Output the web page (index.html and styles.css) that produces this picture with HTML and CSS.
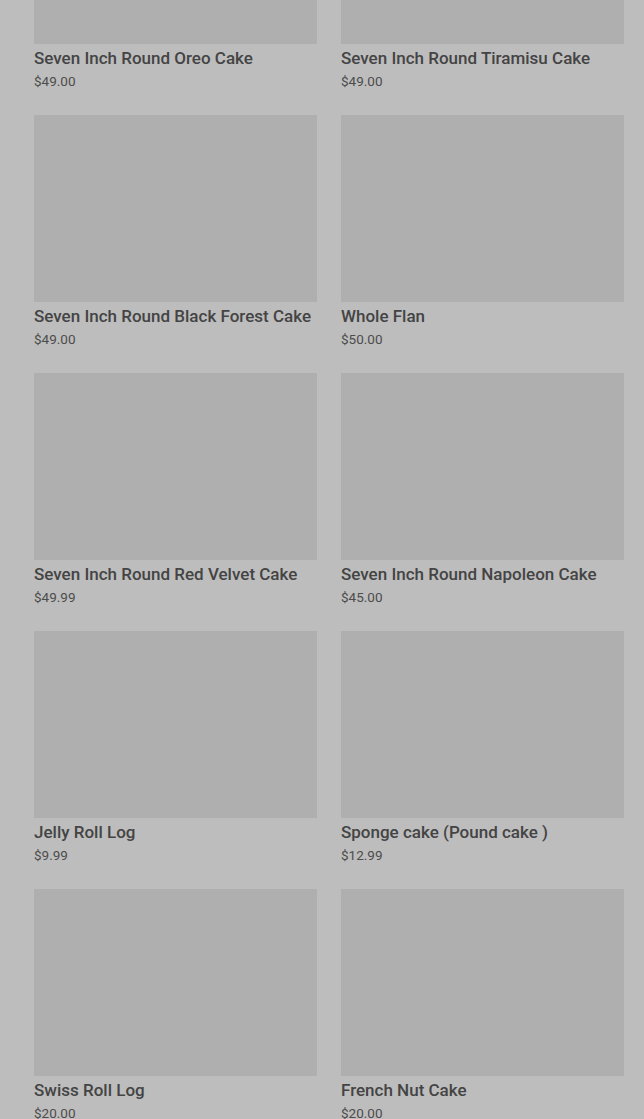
FILE: index.html
```html
<!DOCTYPE html>
<html lang="en">
<head>
  <meta charset="UTF-8" />
  <meta name="viewport" content="width=device-width, initial-scale=1.0"/>
  <title>Cakes</title>
  <link rel="stylesheet" href="styles.css">
</head>
<body>
  <div class="product-grid">
    <div class="card"><div class="thumb"></div><div class="title">Seven Inch Round Oreo Cake</div><div class="price">$49.00</div></div>
    <div class="card"><div class="thumb"></div><div class="title">Seven Inch Round Tiramisu Cake</div><div class="price">$49.00</div></div>
    <div class="card"><div class="thumb"></div><div class="title">Seven Inch Round Black Forest Cake</div><div class="price">$49.00</div></div>
    <div class="card"><div class="thumb"></div><div class="title">Whole Flan</div><div class="price">$50.00</div></div>
    <div class="card"><div class="thumb"></div><div class="title">Seven Inch Round Red Velvet Cake</div><div class="price">$49.99</div></div>
    <div class="card"><div class="thumb"></div><div class="title">Seven Inch Round Napoleon Cake</div><div class="price">$45.00</div></div>
    <div class="card"><div class="thumb"></div><div class="title">Jelly Roll Log</div><div class="price">$9.99</div></div>
    <div class="card"><div class="thumb"></div><div class="title">Sponge cake (Pound cake )</div><div class="price">$12.99</div></div>
    <div class="card"><div class="thumb"></div><div class="title">Swiss Roll Log</div><div class="price">$20.00</div></div>
    <div class="card"><div class="thumb"></div><div class="title">French Nut Cake</div><div class="price">$20.00</div></div>
  </div>
</body>
</html>
```

FILE: styles.css
```css
html, body {
  margin: 0;
  background: #bdbdbd;
  overflow: hidden;
}
body {
  font-family: Roboto, "Liberation Sans", sans-serif;
  color: #404040;
  padding: 0 20px 0 34px;
}
.product-grid {
  margin-top: -143px;
  display: grid;
  grid-template-columns: 283px 283px;
  column-gap: 24px;
  row-gap: 25px;
}
.thumb {
  height: 187px;
  background: #afafaf;
}
.title {
  margin-top: 4px;
  font-size: 17px;
  line-height: 20px;
  font-weight: 500;
  color: #444;
  white-space: nowrap;
}
.price {
  margin-top: 4px;
  font-size: 13.5px;
  line-height: 18px;
  color: #4c4c4c;
}
```
